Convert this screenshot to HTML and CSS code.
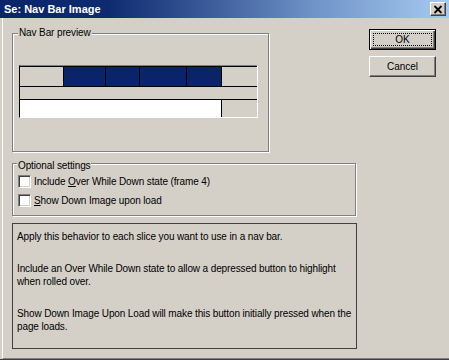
FILE: index.html
```html
<!DOCTYPE html>
<html>
<head>
<meta charset="utf-8">
<title>Set Nav Bar Image</title>
<link rel="stylesheet" href="styles.css">
</head>
<body>
<div class="window">
  <div class="titlebar">
    <span class="title">Se: Nav Bar Image</span>
    <button class="close" aria-label="Close">
      <svg width="10" height="9" viewBox="0 0 10 9"><path d="M1.5 1 L8.5 8 M8.5 1 L1.5 8" stroke="#000" stroke-width="1.8" fill="none"/></svg>
    </button>
  </div>
  <div class="content">
    <div class="main">
      <div class="group preview">
        <div class="group-title">Nav Bar preview</div>
        <div class="navgrid">
          <div class="row row1">
            <div class="cell c1"></div>
            <div class="cell c2 on"></div>
            <div class="cell c3 on"></div>
            <div class="cell c4 on"></div>
            <div class="cell c5 on"></div>
            <div class="cell c6"></div>
          </div>
          <div class="row row2"></div>
          <div class="row row3">
            <div class="cell blank"></div>
            <div class="cell c6"></div>
          </div>
        </div>
      </div>
      <div class="group options">
        <div class="group-title">Optional settings</div>
        <label class="check"><input type="checkbox"><span>Include <u>O</u>ver While Down state (frame 4)</span></label>
        <label class="check"><input type="checkbox"><span><u>S</u>how Down Image upon load</span></label>
      </div>
      <div class="info">
        <p>Apply this behavior to each slice you want to use in a nav bar.</p>
        <p>Include an Over While Down state to allow a depressed button to highlight when rolled over.</p>
        <p>Show Down Image Upon Load will make this button initially pressed when the page loads.</p>
      </div>
    </div>
    <div class="buttons">
      <button class="btn default"><span class="focus">OK</span></button>
      <button class="btn">Cancel</button>
    </div>
  </div>
</div>
</body>
</html>
```
FILE: styles.css
```css
html, body {
  margin: 0;
  padding: 0;
}
body {
  background: #d4d0c8;
  font-family: "Liberation Sans", Arial, sans-serif;
  font-size: 10px;
  letter-spacing: -0.12px;
  color: #000;
}
.window {
  width: 449px;
  height: 360px;
  box-sizing: border-box;
  display: flex;
  flex-direction: column;
  border-bottom: 1px solid #404040;
}
.titlebar {
  height: 18px;
  flex: none;
  box-sizing: border-box;
  display: flex;
  align-items: center;
  justify-content: space-between;
  padding: 0 3px 0 4px;
  background: linear-gradient(90deg, #0a246a 0%, #0e2b70 24%, #3a5a98 46%, #7093c8 70%, #a6caf0 100%);
}
.title {
  color: #fff;
  font-weight: bold;
  font-size: 11px;
  letter-spacing: 0;
  line-height: 14px;
}
.close {
  width: 16px;
  height: 14px;
  padding: 0;
  margin: 0;
  box-sizing: border-box;
  background: #d4d0c8;
  border: 1px solid;
  border-color: #fff #404040 #404040 #fff;
  box-shadow: inset -1px -1px 0 #808080;
  display: flex;
  align-items: center;
  justify-content: center;
}
.close svg {
  display: block;
}
.content {
  flex: 1;
  display: flex;
  gap: 12px;
  margin-left: 2px;
  padding-left: 9px;
  border-left: 1px solid #fff;
  border-bottom: 1px solid #808080;
}
.main {
  width: 345px;
  display: flex;
  flex-direction: column;
}
.group {
  box-sizing: border-box;
  border: 1px solid #808080;
  box-shadow: 1px 1px 0 #fff, inset 1px 1px 0 #fff;
  display: flex;
  flex-direction: column;
}
.group-title {
  align-self: flex-start;
  margin: -7px 0 0 -1px;
  padding: 0 1px;
  line-height: 12px;
  background: #d4d0c8;
}
.preview {
  width: 257px;
  margin-top: 15px;
  padding: 0 0 33px 6px;
}
.navgrid {
  width: 239px;
  margin-top: 26px;
  box-sizing: border-box;
  border-top: 1px solid #808080;
  border-left: 1px solid #000;
  border-right: 1px solid #fff;
  border-bottom: 1px solid #fff;
}
.row {
  display: flex;
}
.row1 {
  height: 19px;
  border-top: 1px solid #000;
  border-bottom: 1px solid #000;
}
.row2 {
  height: 12px;
  border-bottom: 1px solid #000;
}
.row3 {
  height: 17px;
}
.cell {
  box-sizing: border-box;
  border-right: 1px solid #000;
}
.cell.on {
  background: #0a246a;
}
.c1 { width: 44px; }
.c2 { width: 42px; }
.c3 { width: 34px; }
.c4 { width: 47px; }
.c5 { width: 35px; }
.c6 {
  flex: 1;
  border-right: none;
}
.blank {
  width: 202px;
  background: #fff;
}
.options {
  width: 344px;
  margin-top: 11px;
  padding: 3px 0 5px 5px;
}
.check {
  height: 19px;
  display: flex;
  align-items: center;
  gap: 3px;
}
.check input {
  appearance: none;
  -webkit-appearance: none;
  width: 13px;
  height: 13px;
  margin: 0;
  box-sizing: border-box;
  background: #fff;
  border: 1px solid;
  border-color: #808080 #fff #fff #808080;
  box-shadow: inset 1px 1px 0 #404040, inset -1px -1px 0 #d4d0c8;
}
.info {
  height: 126px;
  margin-top: 7px;
  box-sizing: border-box;
  border: 1px solid #404040;
  padding: 6px 1px 0 4px;
}
.info p {
  margin: 0;
  line-height: 13px;
}
.info p + p {
  margin-top: 19px;
}
.buttons {
  width: 67px;
  padding-top: 11px;
  display: flex;
  flex-direction: column;
  gap: 6px;
}
.btn {
  width: 67px;
  height: 21px;
  margin: 0;
  box-sizing: border-box;
  font-family: "Liberation Sans", Arial, sans-serif;
  font-size: 10px;
  color: #000;
  background: #d4d0c8;
  border: 1px solid;
  border-color: #fff #404040 #404040 #fff;
  box-shadow: inset -1px -1px 0 #808080;
  padding: 0;
}
.btn.default {
  border: 1px solid #000;
  box-shadow: inset 1px 1px 0 #fff, inset -1px -1px 0 #404040, inset -2px -2px 0 #808080;
  padding: 3px;
  display: flex;
}
.focus {
  flex: 1;
  border: 1px dotted #000;
  display: flex;
  align-items: center;
  justify-content: center;
}
```
